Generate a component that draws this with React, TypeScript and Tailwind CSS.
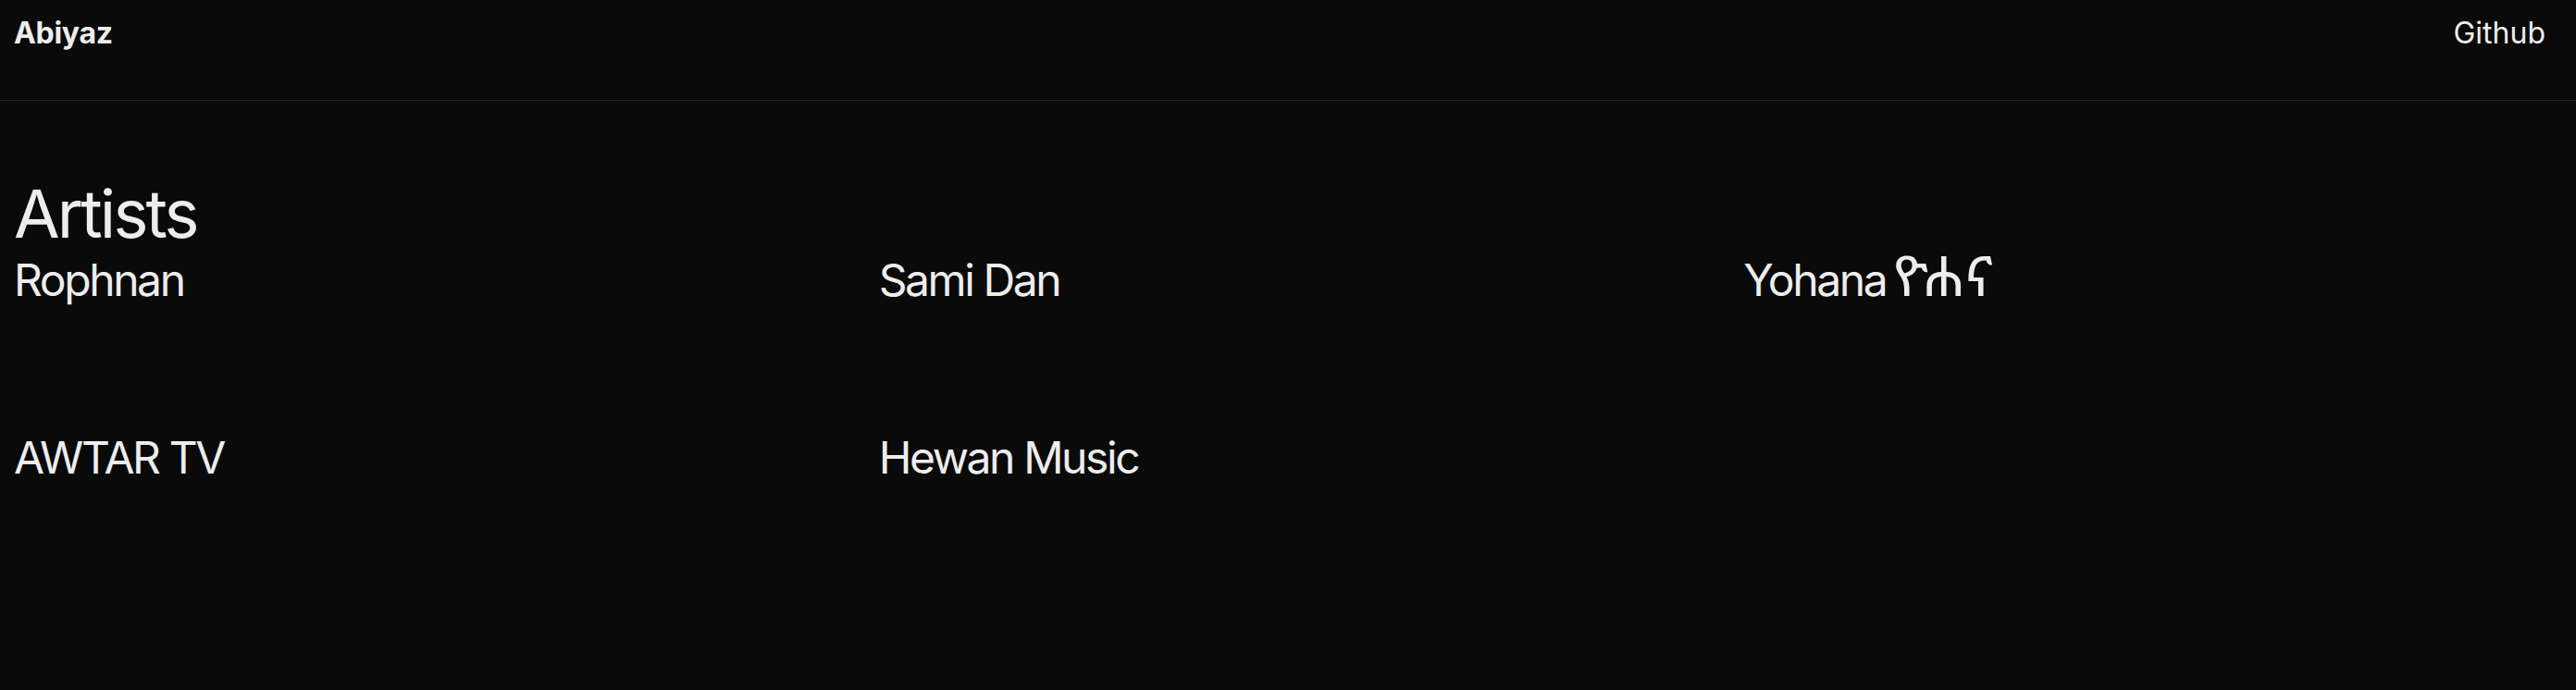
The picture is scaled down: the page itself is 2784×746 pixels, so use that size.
const artists: [string, string?][] = [
  ["Rophnan"],
  ["Sami Dan"],
  ["Yohana", "ዮሐና"],
  ["AWTAR TV"],
  ["Hewan Music"],
];

export default function App() {
  return (
    <div className="min-h-[746px] bg-[#0a0a0a] font-['Inter','Noto_Sans','Noto_Sans_Ethiopic',sans-serif] text-[#ededed]">
      <header className="flex h-[109px] items-start justify-between border-b border-[#262626] pl-[15px] pr-[33px] pt-[20px]">
        <a className="text-[32px] font-bold leading-[32px] tracking-[-0.01em]">Abiyaz</a>
        <a className="text-[32px] leading-[32px]">Github</a>
      </header>

      <main className="px-[15px] pt-[86px]">
        <h1 className="text-[72px] leading-[72px] tracking-[-0.04em]">Artists</h1>
        <ul className="mt-[12px] grid grid-cols-3 gap-x-[50px] gap-y-[144px]">
          {artists.map(([name, native]) => (
            <li key={name} className="h-[48px] text-[48px] leading-[48px] tracking-[-0.05em]">
              {name}
              {native && (
                <span className="ml-[8px] text-[60px] leading-[0] tracking-normal">{native}</span>
              )}
            </li>
          ))}
        </ul>
      </main>
    </div>
  );
}
